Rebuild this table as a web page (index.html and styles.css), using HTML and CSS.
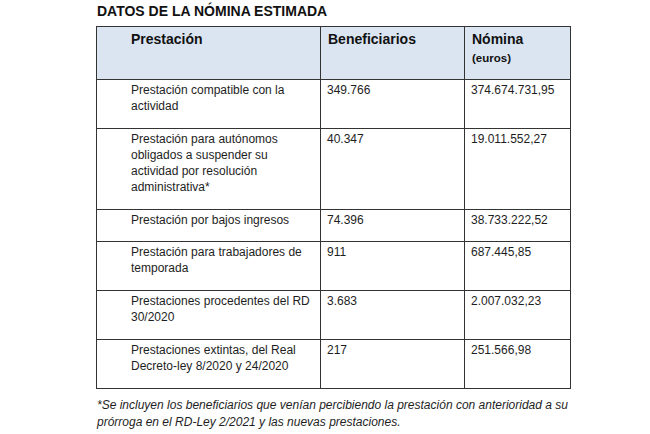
FILE: index.html
```html
<!DOCTYPE html>
<html lang="es">
<head>
<meta charset="utf-8">
<link rel="stylesheet" href="styles.css">
</head>
<body>
<div class="page">
  <h1 class="title">DATOS DE LA NÓMINA ESTIMADA</h1>
  <table class="data">
    <colgroup>
      <col class="c1"><col class="c2"><col class="c3">
    </colgroup>
    <thead>
      <tr>
        <th class="first">Prestación</th>
        <th>Beneficiarios</th>
        <th>Nómina<span class="unit">(euros)</span></th>
      </tr>
    </thead>
    <tbody>
      <tr>
        <td class="first">Prestación compatible con la actividad</td>
        <td>349.766</td>
        <td>374.674.731,95</td>
      </tr>
      <tr>
        <td class="first">Prestación para autónomos obligados a suspender su actividad por resolución administrativa*</td>
        <td>40.347</td>
        <td>19.011.552,27</td>
      </tr>
      <tr>
        <td class="first">Prestación por bajos ingresos</td>
        <td>74.396</td>
        <td>38.733.222,52</td>
      </tr>
      <tr>
        <td class="first">Prestación para trabajadores de temporada</td>
        <td>911</td>
        <td>687.445,85</td>
      </tr>
      <tr>
        <td class="first">Prestaciones procedentes del RD 30/2020</td>
        <td>3.683</td>
        <td>2.007.032,23</td>
      </tr>
      <tr>
        <td class="first">Prestaciones extintas, del Real Decreto-ley 8/2020 y 24/2020</td>
        <td>217</td>
        <td>251.566,98</td>
      </tr>
    </tbody>
  </table>
  <p class="note">*Se incluyen los beneficiarios que venían percibiendo la prestación con anterioridad a su prórroga en el RD-Ley 2/2021 y las nuevas prestaciones.</p>
</div>
</body>
</html>
```

FILE: styles.css
```css
html, body {
  margin: 0;
  padding: 0;
  background: #ffffff;
}

body {
  font-family: "Liberation Sans", Arial, sans-serif;
  color: #1a1a1a;
}

.page {
  padding: 2px 0 0 96px;
  width: 474px;
}

.title {
  margin: 0 0 6px 1px;
  font-size: 14px;
  line-height: 18px;
  font-weight: bold;
  color: #111;
}

.data {
  border-collapse: collapse;
  width: 474px;
  table-layout: fixed;
}

.c1 { width: 224px; }
.c2 { width: 144px; }
.c3 { width: 106px; }

.data th,
.data td {
  border: 1.5px solid #333;
  vertical-align: top;
  text-align: left;
}

.data th {
  background: #dbe5f1;
  height: 53px;
  box-sizing: border-box;
  padding: 3px 6px 0 7px;
  font-size: 14px;
  line-height: 18px;
  font-weight: bold;
  color: #111;
}

.data td {
  padding: 2px 6px 13.75px 6px;
  font-size: 12px;
  line-height: 16px;
  color: #1e1e1e;
}

.data th.first,
.data td.first {
  padding-left: 34px;
}

.unit {
  display: block;
  font-size: 11.5px;
  line-height: 16px;
  margin-top: 2px;
}

.note {
  margin: 8px 0 0 1px;
  font-size: 12px;
  line-height: 17px;
  font-style: italic;
  color: #1e1e1e;
  width: 480px;
}
```
